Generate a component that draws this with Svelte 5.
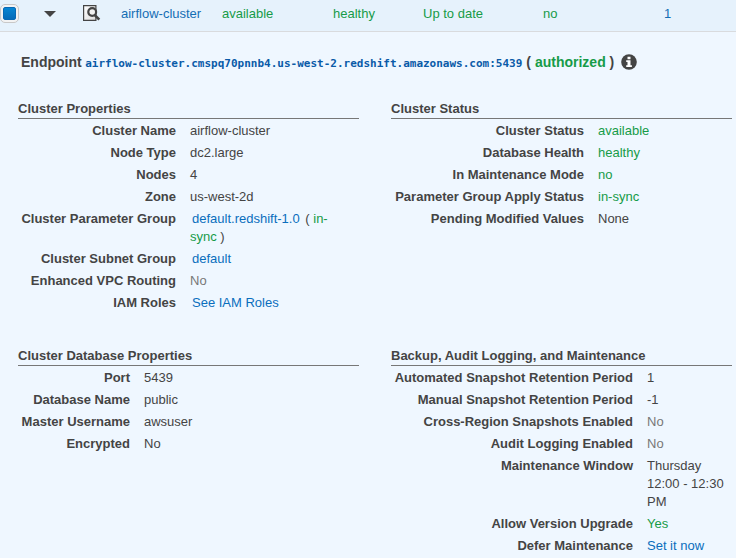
<script>
  const columns = [
    {
      sections: [
        {
          title: 'Cluster Properties',
          labelWidth: 158,
          rows: [
            { label: 'Cluster Name', value: 'airflow-cluster' },
            { label: 'Node Type', value: 'dc2.large' },
            { label: 'Nodes', value: '4' },
            { label: 'Zone', value: 'us-west-2d' },
            { label: 'Cluster Parameter Group', value: 'default.redshift-1.0', kind: 'padded link', sync: true },
            { label: 'Cluster Subnet Group', value: 'default', kind: 'padded link' },
            { label: 'Enhanced VPC Routing', value: 'No', kind: 'muted' },
            { label: 'IAM Roles', value: 'See IAM Roles', kind: 'padded link' }
          ]
        },
        {
          title: 'Cluster Database Properties',
          labelWidth: 112,
          rows: [
            { label: 'Port', value: '5439' },
            { label: 'Database Name', value: 'public' },
            { label: 'Master Username', value: 'awsuser' },
            { label: 'Encrypted', value: 'No' }
          ]
        }
      ]
    },
    {
      sections: [
        {
          title: 'Cluster Status',
          labelWidth: 193,
          rows: [
            { label: 'Cluster Status', value: 'available', kind: 'good' },
            { label: 'Database Health', value: 'healthy', kind: 'good' },
            { label: 'In Maintenance Mode', value: 'no', kind: 'good' },
            { label: 'Parameter Group Apply Status', value: 'in-sync', kind: 'good' },
            { label: 'Pending Modified Values', value: 'None' }
          ]
        },
        {
          title: 'Backup, Audit Logging, and Maintenance',
          labelWidth: 242,
          rows: [
            { label: 'Automated Snapshot Retention Period', value: '1' },
            { label: 'Manual Snapshot Retention Period', value: '-1' },
            { label: 'Cross-Region Snapshots Enabled', value: 'No', kind: 'muted' },
            { label: 'Audit Logging Enabled', value: 'No', kind: 'muted' },
            { label: 'Maintenance Window', value: 'Thursday 12:00 - 12:30 PM' },
            { label: 'Allow Version Upgrade', value: 'Yes', kind: 'good' },
            { label: 'Defer Maintenance', value: 'Set it now', kind: 'link' }
          ]
        }
      ]
    }
  ];
</script>

<main>
  <header>
    <span class="check"><i></i></span>
    <svg class="caret" width="12" height="7" viewBox="0 0 12 7"><path d="M0 0h12L6 6z" fill="#444" /></svg>
    <svg class="inspect" width="18" height="17" viewBox="0 0 18 17">
      <defs>
        <linearGradient id="sheet" x2="1" y2="1">
          <stop offset="0" stop-color="#fff" />
          <stop offset="1" stop-color="#ddd" />
        </linearGradient>
      </defs>
      <path d="M.6.6h12.3v14.8H.6z" fill="url(#sheet)" stroke="#444" stroke-width="1.2" />
      <path d="M11.6 9.8l4.7 4.8" stroke="#444" stroke-width="2.6" />
      <circle cx="9.2" cy="7" r="3.9" fill="#f1f1f1" stroke="#444" stroke-width="2.2" />
    </svg>
    <span class="link">airflow-cluster</span>
    <span class="good">available</span>
    <span class="good">healthy</span>
    <span class="good">Up to date</span>
    <span class="good">no</span>
    <span class="link">1</span>
  </header>

  <div class="endpoint">
    <span>Endpoint</span>
    <code>airflow-cluster.cmspq70pnnb4.us-west-2.redshift.amazonaws.com:5439</code>
    <span class="auth">( <b class="good">authorized</b> )</span>
    <svg width="16" height="16" viewBox="0 0 16 16">
      <circle cx="8" cy="8" r="7.8" fill="#444" />
      <path d="M6.5 2.7h3v2.5h-3zM5.2 6.3h4.3v5h1.4v1.6H5.2v-1.6h1.3V7.9H5.2z" fill="#fff" />
    </svg>
  </div>

  <div class="details">
    {#each columns as column}
      <div class="column">
        {#each column.sections as section}
          <section>
            <h3>{section.title}</h3>
            <dl>
              {#each section.rows as row}
                <div class="row">
                  <dt style:width="{section.labelWidth}px">{row.label}</dt>
                  <dd><span class={row.kind}>{row.value}</span>{#if row.sync}{' '}( <span class="good">in-sync</span> ){/if}</dd>
                </div>
              {/each}
            </dl>
          </section>
        {/each}
      </div>
    {/each}
  </div>
</main>

<style>
  :global(body) { margin: 0; }
  main {
    width: 736px;
    height: 558px;
    overflow: hidden;
    background: #eff7ff;
    color: #444;
    font: 13px/18px "Liberation Sans", Arial, sans-serif;
  }
  header {
    box-sizing: border-box;
    height: 32px;
    border-bottom: 1px solid #d9dbde;
    background: #e6f2fc;
    display: grid;
    grid-template-columns: 44px 39px 38px 101px 111px 90px 120px 121px 1fr;
    align-items: start;
    padding-top: 4px;
  }
  header > span:not(.check) { line-height: 19px; }
  .check {
    box-sizing: border-box;
    width: 19px;
    height: 19px;
    border: 1px solid #c8c8c8;
    border-radius: 5px;
    background: #f3f3f3;
    padding: 2px;
  }
  .check i {
    display: block;
    box-sizing: border-box;
    width: 13px;
    height: 13px;
    border: 1px solid #0769b5;
    border-radius: 2px;
    background: linear-gradient(#0786d3, #066bb8);
  }
  .caret { margin-top: 7px; }
  .inspect { margin-top: 1px; }
  .link { color: #146eb4; }
  dd .link { color: #0a6ebd; }
  .good { color: #169b48; }
  .muted { color: #777; }
  .padded { margin: 0 2px; }
  .endpoint {
    display: flex;
    align-items: center;
    height: 20px;
    padding: 20px 0 0 21px;
    font-size: 14px;
    font-weight: bold;
    line-height: 20px;
    white-space: nowrap;
  }
  code {
    margin: 4px 4px 0 3.6px;
    color: #0a5ba8;
    font: bold 11px/18px "DejaVu Sans Mono", monospace;
  }
  .endpoint svg { margin-left: 6.4px; }
  .details {
    display: flex;
    gap: 32px;
    padding: 27px 0 0 18px;
  }
  .column { width: 341px; flex: none; }
  .column section { height: 247px; }
  h3 {
    margin: 0;
    height: 19px;
    border-bottom: 1px solid #777;
    font-size: 13px;
    line-height: 19px;
  }
  dl { margin: 1px 0 0; }
  .row { display: flex; gap: 14px; padding: 2px 0; }
  dt { flex: none; text-align: right; font-weight: bold; }
  dd { margin: 0; flex: 1; padding-right: 6px; }
</style>
